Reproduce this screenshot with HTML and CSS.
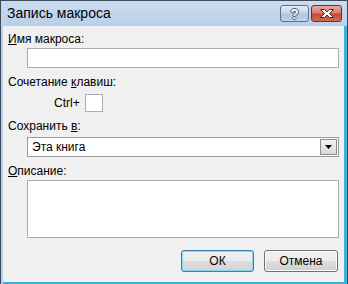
FILE: index.html
```html
<!DOCTYPE html>
<html lang="ru">
<head>
  <meta charset="UTF-8">
  <title>Запись макроса</title>
  <link rel="stylesheet" href="styles.css">
</head>
<body>
  <div class="window">
    <div class="titlebar">
      <span class="title">Запись макроса</span>
      <div class="caption-btns">
        <span class="cap-btn help">?</span>
        <span class="cap-btn close">
          <svg width="18" height="11" viewBox="0 0 18 11">
            <path d="M2.5 1.5h4l2.5 2.4 2.5-2.4h4l-4 4 4 4h-4l-2.5-2.4-2.5 2.4h-4l4-4z" fill="#fff" stroke="#4a2222" stroke-width="1" stroke-linejoin="round"/>
          </svg>
        </span>
      </div>
    </div>

    <div class="client">
      <div class="label"><u>И</u>мя макроса:</div>
      <div class="field name-field"></div>

      <div class="label label-gap">Сочетание <u>к</u>лавиш:</div>
      <div class="shortcut">
        <span>Ctrl+</span>
        <span class="key-box"></span>
      </div>

      <div class="label label-gap">Сохранить <u>в</u>:</div>
      <div class="combo">
        <span class="combo-text">Эта книга</span>
        <span class="combo-btn">
          <svg width="7" height="4" viewBox="0 0 7 4"><path d="M0 0h7l-3.5 4z" fill="#000"/></svg>
        </span>
      </div>

      <div class="label label-gap"><u>О</u>писание:</div>
      <div class="field desc-field"></div>

      <div class="actions">
        <button class="btn btn-default">ОК</button>
        <button class="btn">Отмена</button>
      </div>
    </div>
  </div>
</body>
</html>
```

FILE: styles.css
```css
body {
  margin: 0;
  font-family: "Liberation Sans", Arial, sans-serif;
  font-size: 12px;
  color: #000;
  background: #fff;
}

.window {
  width: 348px;
  height: 284px;
  box-sizing: border-box;
  display: flex;
  flex-direction: column;
  border: 1px solid #3d4a5a;
  border-bottom: none;
  background: #b9d1ea;
}

.titlebar {
  height: 25px;
  flex-shrink: 0;
  display: flex;
  justify-content: space-between;
  align-items: flex-start;
  padding: 0 5px 0 6px;
  background: linear-gradient(#c9dcf1, #b9d0e9);
}

.title {
  font-size: 14px;
  line-height: 25px;
  color: #000;
}

.caption-btns {
  display: flex;
  gap: 2px;
  margin-top: 4px;
}

.cap-btn {
  height: 17px;
  box-sizing: border-box;
  border: 1px solid #5f7189;
  border-radius: 3px;
  display: flex;
  align-items: center;
  justify-content: center;
}

.help {
  width: 29px;
  background: linear-gradient(#e3edf8 0%, #c4d6ec 48%, #aec4df 52%, #bfd2ea 100%);
  font-weight: bold;
  font-size: 14px;
  color: #f4f7fb;
  text-shadow: -1px 0 #4d5d73, 1px 0 #4d5d73, 0 -1px #4d5d73, 0 1px #4d5d73;
}

.close {
  width: 31px;
  border-color: #6e2d2d;
  background: linear-gradient(#e9aa9f 0%, #d7786b 48%, #c24b3c 52%, #d06b57 100%);
}

.client {
  flex: 1;
  margin-left: 2px;
  background: #f0f0f0;
  border-right: 3px solid #3bb1de;
  border-bottom: 2px solid #3bb1de;
  padding: 6px 5px 0 5px;
  display: flex;
  flex-direction: column;
  align-items: flex-start;
}

.label {
  line-height: 15px;
  height: 15px;
}

.label u {
  text-underline-offset: 1px;
}

.label-gap {
  margin-top: 7px;
}

.field {
  margin-left: 19px;
  width: 312px;
  box-sizing: border-box;
  border: 1px solid #abadb3;
  background: #fff;
}

.name-field {
  height: 20px;
  margin-top: 1px;
}

.shortcut {
  display: flex;
  align-items: center;
  gap: 5px;
  margin-left: 46px;
  margin-top: 4px;
  line-height: 15px;
}

.key-box {
  width: 18px;
  height: 18px;
  box-sizing: border-box;
  border: 1px solid #abadb3;
  background: #fff;
}

.combo {
  margin-top: 3px;
  margin-left: 19px;
  width: 312px;
  height: 20px;
  box-sizing: border-box;
  border: 1px solid #9a9a9a;
  background: #fff;
  display: flex;
  align-items: center;
  justify-content: space-between;
  padding: 1px;
}

.combo-text {
  padding-left: 3px;
  line-height: 15px;
}

.combo-btn {
  width: 17px;
  height: 16px;
  box-sizing: border-box;
  border: 1px solid #8c8c8c;
  background: linear-gradient(#f2f2f2, #d9d9d9);
  display: flex;
  align-items: center;
  justify-content: center;
}

.desc-field {
  height: 58px;
  margin-top: 1px;
}

.actions {
  align-self: flex-end;
  display: flex;
  gap: 10px;
  margin-top: 12px;
  margin-right: 1px;
}

.btn {
  width: 74px;
  height: 22px;
  padding: 0;
  font-family: inherit;
  font-size: 12px;
  color: #000;
  border: 1px solid #707070;
  border-radius: 3px;
  background: linear-gradient(#f2f2f2 0%, #ebebeb 50%, #dddddd 50%, #cfcfcf 100%);
  box-shadow: inset 0 0 0 1px #fcfcfc;
}

.btn-default {
  width: 73px;
  border-color: #3c7fb1;
  box-shadow: inset 0 0 0 1px #8fd3f2;
  background: linear-gradient(#f2f2f2 0%, #ebebeb 50%, #dddddd 50%, #d3d3d3 100%);
}
```
